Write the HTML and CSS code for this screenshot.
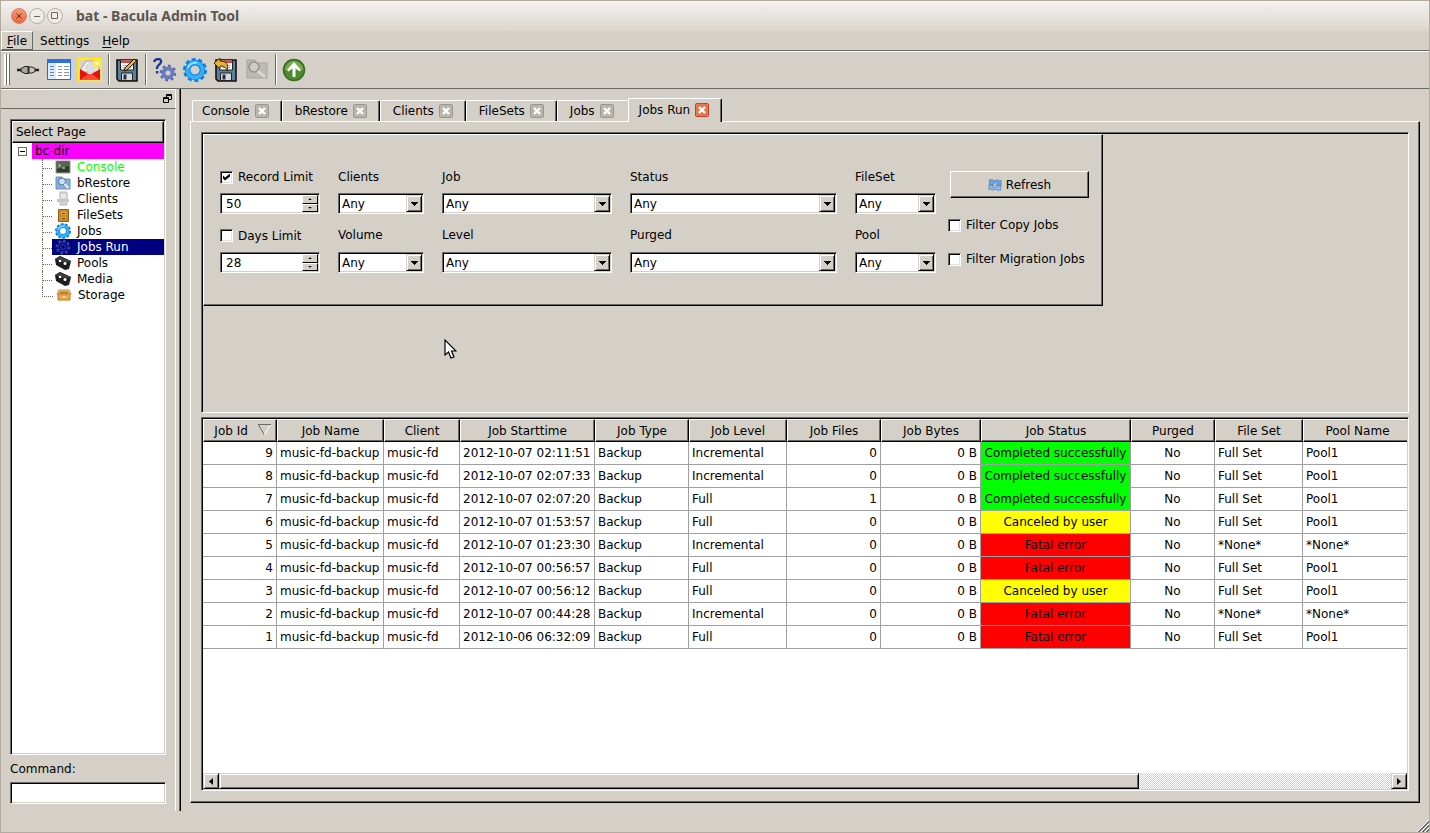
FILE: index.html
```html
<!DOCTYPE html>
<html lang="en">
<head>
    <meta charset="UTF-8">
    <meta name="viewport" content="width=device-width, initial-scale=1.0">
    <title>bat - Bacula Admin Tool</title>
    <link rel="stylesheet" href="styles.css">
</head>
<body>
    <svg class="defs" width="0" height="0" aria-hidden="true">
        <symbol id="down" viewBox="0 0 7 4"><path d="M0 0h7v1h-1v1h-1v1h-1v1h-1v-1h-1v-1h-1v-1h-1z"/></symbol>
        <symbol id="cross" viewBox="0 0 14 14">
            <rect x=".5" y=".5" width="13" height="13" rx="1"/>
            <path d="M4 4l6 6M10 4l-6 6" stroke="#fff" stroke-width="2.4"/>
        </symbol>
        <symbol id="gear" viewBox="0 0 24 24">
            <circle cx="12" cy="12" r="10" fill="none" stroke="#0b7fe4" stroke-width="4" pathLength="20" stroke-dasharray="1.200 .8"/>
            <circle cx="12" cy="12" r="7.400" fill="none" stroke="#0b7fe4" stroke-width="5.600"/>
            <circle cx="12" cy="12" r="7.600" fill="none" stroke="#35b0fb" stroke-width="3.600"/>
            <path d="M5 10a7.500 7.500 0 0 1 9-5" fill="none" stroke="#8fdcff" stroke-width="2"/>
        </symbol>
        <symbol id="floppy" viewBox="0 0 24 24">
            <path d="M2 2h20v21h-18l-2-2z" fill="#5b7f9c" stroke="#111" stroke-width="1.6"/>
            <path d="M5.500 2h13v10h-13z" fill="#fff" stroke="#222"/>
            <path d="M6 2.500h12v2.500h-12z" fill="#d8453c"/>
            <path d="M7.500 7.500h9M7.500 9.500h9" stroke="#aaa"/>
            <path d="M6.500 15h11v7.500h-11z" fill="#d5d9dc" stroke="#222"/>
            <path d="M8.500 16.500h3v5h-3z" fill="#26333d"/>
        </symbol>
        <symbol id="tape" viewBox="0 0 16 16">
            <path d="M0 4l5-3 11 5-2 8-4 1-9-5z" fill="#1d1d1d"/>
            <path d="M0 4l5-3 11 5-5 2z" fill="#3b3b3b"/>
            <circle cx="5" cy="6" r="1.300" fill="#fff"/><circle cx="10" cy="8.500" r="1.500" fill="#fff"/>
        </symbol>
    </svg>

    <header class="titlebar">
        <div class="win-buttons">
            <button type="button" class="win-btn win-close" aria-label="Close"><svg viewBox="0 0 14 14"><path d="M4.500 4.500l5 5M9.500 4.500l-5 5"/></svg></button>
            <button type="button" class="win-btn" aria-label="Minimize"><svg viewBox="0 0 14 14"><path d="M4 7.500h6"/></svg></button>
            <button type="button" class="win-btn" aria-label="Maximize"><svg viewBox="0 0 14 14"><path d="M3.500 3.500h6v6h-6z"/></svg></button>
        </div>
        <h1>bat - Bacula Admin Tool</h1>
    </header>

    <nav class="menubar">
        <button type="button" class="menu active"><u>F</u>ile</button>
        <button type="button" class="menu">Settings</button>
        <button type="button" class="menu"><u>H</u>elp</button>
    </nav>

    <div class="toolbar">
        <span class="handle"></span>
        <button type="button" class="tool" aria-label="Connect">
            <svg viewBox="0 0 24 24"><path d="M1 12h5M18 12h5" stroke="#222" stroke-width="2.400"/><path d="M5 10.500l4-2h3v7h-3l-4-2z" fill="#aaa69d" stroke="#222"/><path d="M13 9h3l3 1.500v3l-3 1.500h-3z" fill="#c9c5bc" stroke="#222"/><path d="M12.500 8v8" stroke="#333"/></svg>
        </button>
        <button type="button" class="tool" aria-label="Label">
            <svg viewBox="0 0 24 24"><path d="M.5 1.500h23v20h-23z" fill="#fff" stroke="#2c62cf"/><path d="M0 1h24v4h-24z" fill="#2d6ee0"/><path d="M1 5h8v16h-8z" fill="#dce8fb"/><path d="M3 8.500h4M3 11.500h4M3 14.500h4M3 17.500h4" stroke="#5684cf"/><path d="M11 8.500h4M17 8.500h5M11 11.500h4M17 11.500h5M11 14.500h4M17 14.500h5M11 17.500h4M17 17.500h5" stroke="#8298b8"/></svg>
        </button>
        <button type="button" class="tool" aria-label="Messages">
            <svg viewBox="0 0 24 24"><path d="M.7.7h22.600v22.600h-22.600z" fill="#d9d2cc" stroke="#fff000" stroke-width="1.500"/><path d="M3 11l5-8h8l5 8v3h-18z" fill="#eee" stroke="#c99"/><path d="M6 10l5-6h5l3 7-7 5z" fill="#ddd"/><path d="M2 11l10 6 10-6v11h-20z" fill="#e3120b"/><path d="M2 22l8-6h4l8 6z" fill="#ff4a35"/><circle cx="19" cy="5.500" r="4" fill="#ffe94a"/><circle cx="19" cy="5.500" r="1.500" fill="#fff"/></svg>
        </button>
        <span class="sep"></span>
        <button type="button" class="tool" aria-label="Save">
            <svg viewBox="0 0 24 24"><use href="#floppy"/><path d="M9 13l1-3 9-9 2.500 2-9.500 9z" fill="#f2b632" stroke="#111"/></svg>
        </button>
        <span class="sep"></span>
        <button type="button" class="tool" aria-label="Query">
            <svg viewBox="0 0 24 24"><circle cx="16" cy="15" r="7" fill="none" stroke="#5b6cb4" stroke-width="3" pathLength="16" stroke-dasharray="1 1"/><circle cx="16" cy="15" r="4.500" fill="none" stroke="#6b79bd" stroke-width="4"/><path d="M2 4c1-4 8-4 7 0-.5 3-4 3-4 6v1M5 13v2.500" fill="none" stroke="#1b3796" stroke-width="2.300"/></svg>
        </button>
        <button type="button" class="tool" aria-label="Run"><svg viewBox="0 0 24 24"><use href="#gear"/></svg></button>
        <button type="button" class="tool" aria-label="Restore">
            <svg viewBox="0 0 24 24"><use href="#floppy"/><path d="M0 5l6-5v3c6 0 9 3 7 10-1-4-3-5-7-5v3z" fill="#e8b13c" stroke="#422800"/></svg>
        </button>
        <button type="button" class="tool" aria-label="Browse" disabled>
            <svg viewBox="0 0 24 24"><path d="M2 2h8l2 3h10v15h-20z" fill="#bdbab4" stroke="#a6a39d"/><circle cx="9" cy="9" r="5" fill="#cfccc6" stroke="#96938d" stroke-width="1.600"/><path d="M13 13l7 6" stroke="#dedbd5" stroke-width="2.600"/></svg>
        </button>
        <span class="sep"></span>
        <button type="button" class="tool" aria-label="Up">
            <svg viewBox="0 0 24 24"><circle cx="12" cy="12" r="10.500" fill="#4d8c2c" stroke="#3b6b25" stroke-width="1.500"/><path d="M3 12a9 9 0 0 1 18 0z" fill="#78ab50"/><path d="M12 4l7 8-1.500 1.500-4-3.500v9h-3v-9l-4 3.500-1.500-1.500z" fill="#fff"/></svg>
        </button>
    </div>

    <div class="workspace">
        <aside class="dock">
            <div class="dock-title">
                <button type="button" class="float-btn" aria-label="Float"><svg viewBox="0 0 9 9"><path d="M3.500 4v-3.500h5v5h-2.500M3 1.500h6M.5 3.500h5v5h-5zM0 4.500h6" fill="none" stroke="#000"/></svg></button>
            </div>
            <div class="dock-body">
                <div class="tree sunken">
                    <div class="tree-head">Select Page</div>
                    <div class="tree-root"><span class="expander"></span><span class="root-name">bc-dir</span></div>
                    <ul>
                        <li><a href="#" class="green"><svg viewBox="0 0 16 16"><path d="M1 2h14v12h-14z" fill="#2e3d2c" stroke="#999"/><path d="M2 3h12v4l-12 3z" fill="#53684e"/><path d="M3.500 5l2 1.500-2 1.500M7 9h3" fill="none" stroke="#d3f2cc"/></svg>Console</a></li>
                        <li><a href="#"><svg viewBox="0 0 16 16"><path d="M1 2h6l1 2h7v10h-14z" fill="#87aed8" stroke="#6b92bd"/><circle cx="7" cy="6.500" r="3.500" fill="#c8ddf3" stroke="#54779f"/><path d="M9.500 9l4 4" stroke="#e9f1fa" stroke-width="2"/></svg>bRestore</a></li>
                        <li><a href="#"><svg viewBox="0 0 16 16"><path d="M5 1h7v13h-7z" fill="#d5d5d5" stroke="#bbb"/><path d="M2 8h12v3h-12z" fill="#c7c7c7"/><path d="M6 4h5M6 6h5" stroke="#fff"/></svg>Clients</a></li>
                        <li><a href="#"><svg viewBox="0 0 16 16"><path d="M3.500 2.500h10v12h-10z" fill="#c98a29" stroke="#94600f"/><path d="M6 5h5v3h-5zM6 10h5v2h-5z" fill="#e0a548"/><path d="M7 6.500h3M7 11.500h3" stroke="#6b460c"/></svg>FileSets</a></li>
                        <li><a href="#"><svg viewBox="0 0 24 24"><use href="#gear"/></svg>Jobs</a></li>
                        <li><a href="#" class="selected"><svg viewBox="0 0 16 16"><g fill="none" stroke="#3849a0"><circle cx="8" cy="8" r="6.500" stroke-width="2" pathLength="16" stroke-dasharray="1 1"/><circle cx="8" cy="8" r="5"/><circle cx="8" cy="8" r="2.500"/></g></svg>Jobs Run</a></li>
                        <li><a href="#"><svg viewBox="0 0 16 16"><use href="#tape"/></svg>Pools</a></li>
                        <li><a href="#"><svg viewBox="0 0 16 16"><use href="#tape"/></svg>Media</a></li>
                        <li><a href="#"><svg viewBox="0 0 16 16"><path d="M2 7h12v6h-12z" fill="#eda743" stroke="#c57c20"/><path d="M3 3h10l2 4h-14z" fill="#f8cf8b" stroke="#c9893a"/><path d="M4 4.500h8l1 2h-10z" fill="#b87427"/><path d="M6 10h4" stroke="#fff"/></svg>Storage</a></li>
                    </ul>
                </div>
                <label class="cmd-label" for="command">Command:</label>
                <input type="text" id="command" class="sunken">
            </div>
        </aside>

        <main>
            <div class="tabs">
                <div class="tab first"><span>Console</span><button type="button" aria-label="Close Console"><svg><use href="#cross"/></svg></button></div>
                <div class="tab"><span>bRestore</span><button type="button" aria-label="Close bRestore"><svg><use href="#cross"/></svg></button></div>
                <div class="tab"><span>Clients</span><button type="button" aria-label="Close Clients"><svg><use href="#cross"/></svg></button></div>
                <div class="tab"><span>FileSets</span><button type="button" aria-label="Close FileSets"><svg><use href="#cross"/></svg></button></div>
                <div class="tab before-current"><span>Jobs</span><button type="button" aria-label="Close Jobs"><svg><use href="#cross"/></svg></button></div>
                <div class="tab current"><span>Jobs Run</span><button type="button" aria-label="Close Jobs Run"><svg><use href="#cross"/></svg></button></div>
            </div>

            <div class="page">
                <section class="top-pane sunken">
                    <form class="filters">
                        <div class="fields">
                            <label class="check"><input type="checkbox" checked>Record Limit</label>
                            <label for="clients">Clients</label>
                            <label for="job">Job</label>
                            <label for="status">Status</label>
                            <label for="fileset">FileSet</label>

                            <div class="spin sunken"><input type="text" value="50" aria-label="Record limit value"><span class="steps"><button type="button" class="step-up" aria-label="More"></button><button type="button" class="step-down" aria-label="Less"></button></span></div>
                            <div class="combo sunken"><select id="clients"><option>Any</option></select><span class="arrow"><svg><use href="#down"/></svg></span></div>
                            <div class="combo sunken"><select id="job"><option>Any</option></select><span class="arrow"><svg><use href="#down"/></svg></span></div>
                            <div class="combo sunken"><select id="status"><option>Any</option></select><span class="arrow"><svg><use href="#down"/></svg></span></div>
                            <div class="combo sunken"><select id="fileset"><option>Any</option></select><span class="arrow"><svg><use href="#down"/></svg></span></div>

                            <label class="check second"><input type="checkbox">Days Limit</label>
                            <label class="second" for="volume">Volume</label>
                            <label class="second" for="level">Level</label>
                            <label class="second" for="purged">Purged</label>
                            <label class="second" for="pool">Pool</label>

                            <div class="spin sunken"><input type="text" value="28" aria-label="Days limit value"><span class="steps"><button type="button" class="step-up" aria-label="More"></button><button type="button" class="step-down" aria-label="Less"></button></span></div>
                            <div class="combo sunken"><select id="volume"><option>Any</option></select><span class="arrow"><svg><use href="#down"/></svg></span></div>
                            <div class="combo sunken"><select id="level"><option>Any</option></select><span class="arrow"><svg><use href="#down"/></svg></span></div>
                            <div class="combo sunken"><select id="purged"><option>Any</option></select><span class="arrow"><svg><use href="#down"/></svg></span></div>
                            <div class="combo sunken"><select id="pool"><option>Any</option></select><span class="arrow"><svg><use href="#down"/></svg></span></div>
                        </div>
                        <div class="actions">
                            <button type="button" class="refresh">
                                <svg viewBox="0 0 16 16"><path d="M1.500 2h4l1 1.500c3-2 6-1 7.500 0l1-1v6h-6l2-2.500c-2-1-4-1-5 1.500h-4.500z" fill="#6ea3dc" stroke="#4478b4" stroke-width=".7"/><path d="M14.500 14h-4l-1-1.500c-3 2-6 1-7.500 0l-1 1v-5.500h6l-2 2.500c2 1 4 .5 5-2h4.500z" fill="#8ab8e8" stroke="#4478b4" stroke-width=".7"/></svg>
                                Refresh
                            </button>
                            <label class="check"><input type="checkbox">Filter Copy Jobs</label>
                            <label class="check"><input type="checkbox">Filter Migration Jobs</label>
                        </div>
                    </form>
                </section>

                <section class="results sunken">
                    <div class="table-wrap">
                        <table>
                            <colgroup>
                                <col class="w-id"><col class="w-name"><col class="w-client"><col class="w-start"><col class="w-type"><col class="w-level"><col class="w-files"><col class="w-bytes"><col class="w-status"><col class="w-purged"><col class="w-set"><col class="w-pool">
                            </colgroup>
                            <thead>
                                <tr>
                                    <th class="sorted">Job Id <svg class="sort" viewBox="0 0 13 12"><path d="M.5 1l6 10" stroke="#6a6862"/><path d="M12 1l-5.500 10" stroke="#fff"/><path d="M0 .5h13" stroke="#6a6862"/></svg></th>
                                    <th>Job Name</th><th>Client</th><th>Job Starttime</th><th>Job Type</th><th>Job Level</th><th>Job Files</th><th>Job Bytes</th><th>Job Status</th><th>Purged</th><th>File Set</th><th>Pool Name</th>
                                </tr>
                            </thead>
                            <tbody>
                                <tr><td class="num">9</td><td>music-fd-backup</td><td>music-fd</td><td>2012-10-07 02:11:51</td><td>Backup</td><td>Incremental</td><td class="num">0</td><td class="num">0 B</td><td class="ok">Completed successfully</td><td class="mid">No</td><td>Full Set</td><td>Pool1</td></tr>
                                <tr><td class="num">8</td><td>music-fd-backup</td><td>music-fd</td><td>2012-10-07 02:07:33</td><td>Backup</td><td>Incremental</td><td class="num">0</td><td class="num">0 B</td><td class="ok">Completed successfully</td><td class="mid">No</td><td>Full Set</td><td>Pool1</td></tr>
                                <tr><td class="num">7</td><td>music-fd-backup</td><td>music-fd</td><td>2012-10-07 02:07:20</td><td>Backup</td><td>Full</td><td class="num">1</td><td class="num">0 B</td><td class="ok">Completed successfully</td><td class="mid">No</td><td>Full Set</td><td>Pool1</td></tr>
                                <tr><td class="num">6</td><td>music-fd-backup</td><td>music-fd</td><td>2012-10-07 01:53:57</td><td>Backup</td><td>Full</td><td class="num">0</td><td class="num">0 B</td><td class="canceled">Canceled by user</td><td class="mid">No</td><td>Full Set</td><td>Pool1</td></tr>
                                <tr><td class="num">5</td><td>music-fd-backup</td><td>music-fd</td><td>2012-10-07 01:23:30</td><td>Backup</td><td>Incremental</td><td class="num">0</td><td class="num">0 B</td><td class="fatal">Fatal error</td><td class="mid">No</td><td>*None*</td><td>*None*</td></tr>
                                <tr><td class="num">4</td><td>music-fd-backup</td><td>music-fd</td><td>2012-10-07 00:56:57</td><td>Backup</td><td>Full</td><td class="num">0</td><td class="num">0 B</td><td class="fatal">Fatal error</td><td class="mid">No</td><td>Full Set</td><td>Pool1</td></tr>
                                <tr><td class="num">3</td><td>music-fd-backup</td><td>music-fd</td><td>2012-10-07 00:56:12</td><td>Backup</td><td>Full</td><td class="num">0</td><td class="num">0 B</td><td class="canceled">Canceled by user</td><td class="mid">No</td><td>Full Set</td><td>Pool1</td></tr>
                                <tr><td class="num">2</td><td>music-fd-backup</td><td>music-fd</td><td>2012-10-07 00:44:28</td><td>Backup</td><td>Incremental</td><td class="num">0</td><td class="num">0 B</td><td class="fatal">Fatal error</td><td class="mid">No</td><td>*None*</td><td>*None*</td></tr>
                                <tr><td class="num">1</td><td>music-fd-backup</td><td>music-fd</td><td>2012-10-06 06:32:09</td><td>Backup</td><td>Full</td><td class="num">0</td><td class="num">0 B</td><td class="fatal">Fatal error</td><td class="mid">No</td><td>Full Set</td><td>Pool1</td></tr>
                            </tbody>
                        </table>
                    </div>
                    <div class="scrollbar">
                        <button type="button" class="scroll-btn" aria-label="Scroll left"><svg viewBox="0 0 4 7"><path d="M4 0v7l-4-3.500z"/></svg></button>
                        <div class="track"><div class="thumb"></div></div>
                        <button type="button" class="scroll-btn" aria-label="Scroll right"><svg viewBox="0 0 4 7"><path d="M0 0v7l4-3.500z"/></svg></button>
                    </div>
                </section>
            </div>
        </main>
    </div>

    <footer class="statusbar">
        <svg viewBox="0 0 13 13"><path d="M1 13l12-12M5 13l8-8M9 13l4-4" stroke="#fff"/><path d="M2 13l11-11M3 13l10-10M6 13l7-7M7 13l6-6M10 13l3-3M11 13l2-2" stroke="#6a6862"/></svg>
    </footer>

    <svg class="pointer" viewBox="0 0 13 20"><path d="M1 1v15l3.500-3 2.500 6 3-1-2.500-6h4.500z" fill="#fff" stroke="#000" stroke-width="1.200"/></svg>
</body>
</html>
```
FILE: styles.css
```css
* {
    box-sizing: border-box;
}
body {
    margin: 0;
    min-height: 100vh;
    display: flex;
    flex-direction: column;
    position: relative;
    overflow: hidden;
    background: #d4d0c8;
    border: 1px solid #b5aaa0;
    color: #000;
    font-family: "DejaVu Sans", sans-serif;
    font-size: 12px;
    line-height: 16px;
}
button, input, select {
    margin: 0;
    padding: 0;
    border: 0;
    border-radius: 0;
    outline: none;
    background: transparent;
    color: inherit;
    font: inherit;
}
svg {
    display: block;
    flex: none;
}
.defs {
    position: absolute;
}
.sunken {
    border: 1px solid;
    border-color: #6a6862 #fff #fff #6a6862;
    box-shadow: inset 1px 1px #000, inset -1px -1px #d4d0c8;
}

/* title bar */
.titlebar {
    display: flex;
    align-items: center;
    gap: 13px;
    height: 30px;
    padding: 0 10px;
    background: linear-gradient(#f4f2ef, #dbd5ce);
}
.titlebar h1 {
    margin: 0;
    color: #5c5650;
    font-family: "Noto Sans", sans-serif;
    font-size: 14px;
    font-weight: bold;
}
.win-buttons {
    display: flex;
    gap: 2px;
}
.win-btn {
    width: 16px;
    height: 16px;
    border: 1px solid #b5aea6;
    border-radius: 50%;
    background: #efebe7;
}
.win-btn svg {
    width: 14px;
    height: 14px;
    fill: none;
    stroke: #6d675f;
}
.win-close {
    border-color: #d08065;
    background: linear-gradient(#f89a77, #e8663d);
}
.win-close svg {
    stroke: #5f2b18;
}

/* menu and toolbar */
.menubar {
    display: flex;
    gap: 1px;
    height: 20px;
    border-bottom: 1px solid #6a6862;
}
.menu {
    height: 19px;
    padding: 0 5px;
    border: 1px solid transparent;
}
.menu u {
    text-underline-offset: 2px;
}
.menu.active {
    border-color: #fff #6a6862 #6a6862 #fff;
}
.toolbar {
    display: flex;
    align-items: center;
    height: 38px;
    padding-left: 3px;
    border-bottom: 1px solid #6a6862;
    box-shadow: inset 0 1px #fff;
}
.handle {
    width: 6px;
    height: 31px;
    margin-right: 3px;
    border-left: 2px solid #fff;
    border-right: 1px solid #6a6862;
    background: linear-gradient(to right, #6a6862 1px, #fff 1px);
}
.tool {
    width: 31px;
    height: 31px;
    padding: 3px;
}
.tool svg {
    width: 24px;
    height: 24px;
}
.sep {
    width: 2px;
    height: 31px;
    margin: 0 2px;
    border-left: 1px solid #6a6862;
    border-right: 1px solid #fff;
}
.workspace {
    display: flex;
    flex: 1;
}

/* left dock */
.dock {
    display: flex;
    flex-direction: column;
    width: 180px;
    border-right: 1px solid #000;
    box-shadow: inset -1px 0 #6a6862;
    padding-right: 4px;
}
.dock-title {
    display: flex;
    align-items: flex-start;
    justify-content: flex-end;
    height: 20px;
    padding: 4px 3px;
    border-top: 1px solid #fff;
    border-right: 1px solid #fff;
    border-bottom: 1px solid #6a6862;
}
.float-btn svg {
    width: 9px;
    height: 9px;
}
.dock-body {
    display: flex;
    flex-direction: column;
    flex: 1;
    padding: 10px 9px 7px;
    border-right: 1px solid #fff;
}
.tree {
    flex: 1;
    padding: 1px;
    background: #fff;
}
.tree-head {
    height: 22px;
    padding: 2px 3px;
    background: #d4d0c8;
    border: 1px solid;
    border-color: #fff #000 #000 #fff;
    box-shadow: inset -1px -1px #6a6862;
}
.tree-root {
    display: flex;
    align-items: center;
    height: 16px;
}
.expander {
    width: 9px;
    height: 9px;
    margin: 0 5px 0 6px;
    border: 1px solid #6a6862;
    background: linear-gradient(#000, #000) center / 5px 1px no-repeat;
}
.root-name {
    flex: 1;
    padding-left: 3px;
    background: #f0f;
}
.tree ul {
    list-style: none;
    margin: 0;
    padding: 0;
}
.tree li {
    display: flex;
    height: 16px;
    margin-left: 30px;
    border-left: 1px dotted #6a6862;
}
.tree li::before {
    content: "";
    width: 9px;
    height: 9px;
    border-bottom: 1px dotted #6a6862;
}
.tree li:last-child {
    border-left: 0;
}
.tree li:last-child::before {
    width: 10px;
    border-left: 1px dotted #6a6862;
}
.tree a {
    display: flex;
    flex: 1;
    gap: 6px;
    padding-left: 3px;
    color: #000;
    text-decoration: none;
}
.tree a svg {
    width: 16px;
    height: 16px;
}
.tree a.green {
    color: #0f0;
}
.tree a.selected {
    background: #000080;
    color: #fff;
}
.cmd-label {
    padding: 6px 0 5px;
}
#command {
    width: 100%;
    height: 22px;
    padding: 0 4px;
    background: #fff;
}

/* tabs */
main {
    display: flex;
    flex-direction: column;
    flex: 1;
    min-width: 0;
    padding: 9px 9px 8px;
}
.tabs {
    display: flex;
    align-items: flex-end;
    height: 23px;
    padding-left: 2px;
}
.tab {
    display: flex;
    align-items: center;
    gap: 5px;
    height: 21px;
    padding: 0 12px;
    border: 1px solid;
    border-color: #fff #000 transparent #fff;
    border-bottom: 0;
    border-radius: 2px 2px 0 0;
    box-shadow: inset -1px 0 #6a6862;
}
.tab button, .tab svg {
    width: 14px;
    height: 14px;
}
.tab svg {
    fill: #b8b5ad;
    stroke: #9a9790;
}
.tab.first {
    padding-left: 9px;
}
.tab.before-current {
    padding-right: 14px;
    border-right: 0;
    box-shadow: none;
}
.tab.current {
    position: relative;
    height: 24px;
    margin-bottom: -1px;
    padding: 0 12px 2px 10px;
    background: #d4d0c8;
}
.tab.current svg {
    fill: #e07a50;
    stroke: #d63a26;
}
.page {
    display: flex;
    flex-direction: column;
    flex: 1;
    gap: 4px;
    padding: 10px 10px 11px;
    border: 1px solid;
    border-color: #fff #000 #000 #fff;
    box-shadow: inset -1px -1px #6a6862;
}
.top-pane {
    display: flex;
    align-items: flex-start;
    height: 281px;
    padding: 1px;
}

/* filter box */
.filters {
    display: flex;
    gap: 12px;
    height: 172px;
    padding: 34px 13px 0 16px;
    border: 1px solid;
    border-color: #fff #000 #000 #fff;
    box-shadow: inset -1px -1px #6a6862;
}
.fields {
    display: grid;
    grid-template-columns: 100px 86px 170px 207px 81px;
    column-gap: 18px;
    row-gap: 8px;
    align-content: start;
}
.fields label {
    height: 16px;
}
.fields .second {
    height: 22px;
    padding-top: 5px;
}
.check {
    display: flex;
    align-items: center;
    gap: 5px;
}
.check input {
    appearance: none;
    width: 13px;
    height: 13px;
    background: #fff;
    border: 1px solid;
    border-color: #6a6862 #fff #fff #6a6862;
    box-shadow: inset 1px 1px #000, inset -1px -1px #e4e2dd;
}
.check input:checked::before {
    content: "";
    display: block;
    width: 7px;
    height: 7px;
    margin: 2px;
    background: #000;
    clip-path: polygon(0 29%, 29% 57%, 100% 0, 100% 43%, 29% 100%, 0 71%);
}
.spin, .combo {
    display: flex;
    height: 21px;
    padding: 1px;
    background: #fff;
}
.spin input {
    flex: 1;
    min-width: 0;
    padding-left: 4px;
}
.steps {
    display: flex;
    flex-direction: column;
    width: 16px;
}
.steps button {
    display: flex;
    flex: 1;
    align-items: center;
    justify-content: center;
    background: #d4d0c8;
    border: 1px solid;
    border-color: #fff #000 #000 #fff;
}
.steps button::before {
    content: "";
    width: 4px;
    height: 2px;
    background: #000;
    clip-path: polygon(0 100%, 50% 0, 100% 100%);
}
.steps .step-down::before {
    clip-path: polygon(0 0, 100% 0, 50% 100%);
}
.combo {
    position: relative;
}
.combo select {
    appearance: none;
    flex: 1;
    padding-left: 2px;
}
.arrow {
    position: absolute;
    top: 1px;
    right: 1px;
    bottom: 1px;
    display: flex;
    align-items: center;
    justify-content: center;
    width: 16px;
    pointer-events: none;
    background: #d4d0c8;
    border: 1px solid;
    border-color: #d4d0c8 #000 #000 #d4d0c8;
    box-shadow: inset 1px 1px #fff, inset -1px -1px #6a6862;
}
.arrow svg {
    width: 7px;
    height: 4px;
}
.actions {
    display: flex;
    flex-direction: column;
    min-width: 141px;
}
.actions .check {
    height: 34px;
}
.refresh {
    display: flex;
    align-items: center;
    justify-content: center;
    gap: 4px;
    height: 27px;
    margin: 2px 0 10px 2px;
    border: 1px solid;
    border-color: #fff #000 #000 #fff;
    box-shadow: inset -1px -1px #6a6862;
}
.refresh svg {
    width: 14px;
    height: 14px;
}

/* job table */
.results {
    display: flex;
    flex-direction: column;
    flex: 1;
    padding: 1px;
    background: #fff;
}
.table-wrap {
    flex: 1;
    overflow: hidden;
}
table {
    table-layout: fixed;
    width: 1209px;
    border-collapse: separate;
    border-spacing: 0;
    white-space: nowrap;
}
.w-id { width: 74px; }
.w-name { width: 107px; }
.w-client { width: 76px; }
.w-start { width: 135px; }
.w-type { width: 94px; }
.w-level { width: 98px; }
.w-files { width: 94px; }
.w-bytes { width: 100px; }
.w-status { width: 150px; }
.w-purged { width: 84px; }
.w-set { width: 88px; }
.w-pool { width: 109px; }
th {
    height: 23px;
    padding: 0;
    background: #d4d0c8;
    border: 1px solid;
    border-color: #fff #000 #000 #fff;
    box-shadow: inset -1px -1px #6a6862;
    font-weight: normal;
}
.sorted {
    padding-left: 5px;
}
.sort {
    display: inline-block;
    width: 13px;
    height: 12px;
    margin-left: 6px;
    vertical-align: -1px;
}
td {
    height: 23px;
    padding: 0 3px;
    border-right: 1px solid #a0a0a4;
    border-bottom: 1px solid #a0a0a4;
}
.num {
    text-align: right;
}
.mid, .ok, .canceled, .fatal {
    text-align: center;
}
.ok {
    background: #0f0;
}
.canceled {
    background: #ff0;
}
.fatal {
    background: #f00;
}
.scrollbar {
    display: flex;
    height: 16px;
}
.scroll-btn, .thumb {
    background: #d4d0c8;
    border: 1px solid;
    border-color: #d4d0c8 #000 #000 #d4d0c8;
    box-shadow: inset 1px 1px #fff, inset -1px -1px #6a6862;
}
.scroll-btn {
    display: flex;
    align-items: center;
    justify-content: center;
    width: 16px;
}
.scroll-btn svg {
    width: 4px;
    height: 7px;
}
.track {
    flex: 1;
    background: repeating-conic-gradient(#d4d0c8 0 25%, #fff 0 50%) 0 0 / 2px 2px;
}
.thumb {
    width: 78.5%;
    height: 16px;
}
.statusbar {
    display: flex;
    align-items: flex-end;
    justify-content: flex-end;
    height: 21px;
}
.statusbar svg {
    width: 13px;
    height: 13px;
}
.pointer {
    position: absolute;
    top: 338px;
    left: 443px;
    width: 13px;
    height: 20px;
}
```
